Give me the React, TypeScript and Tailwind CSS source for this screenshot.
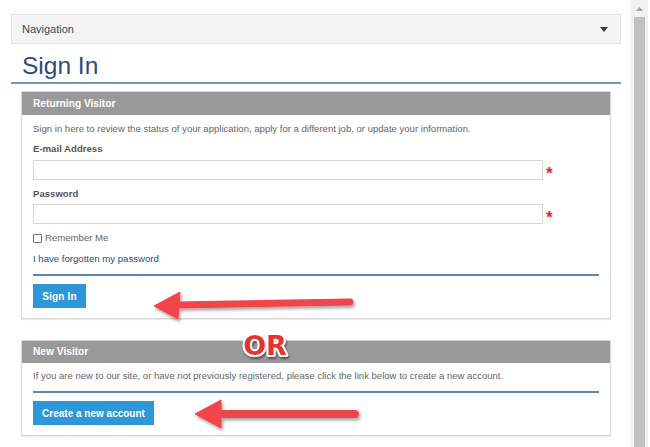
import { useState } from 'react';

const font = { fontFamily: '"Liberation Sans", Arial, sans-serif' };

function Panel({ title, headerH, children }: { title: string; headerH: string; children: React.ReactNode }) {
  return (
    <div className="border border-[#d9d9d9] bg-white shadow-[0_1px_1px_rgba(0,0,0,0.08)]">
      <div className={`${headerH} bg-[#999999] pl-[11px] flex items-center text-[10.2px] font-bold text-white`}>{title}</div>
      <div className="px-[11px] pb-[10px]">{children}</div>
    </div>
  );
}

function Field({ type }: { type: string }) {
  return (
    <div className="h-[20px] flex items-center">
      <input type={type} className="w-[510px] h-[20px] border border-[#d6d6d6] bg-white outline-none px-1 text-[11px]" />
      <span className="ml-[3px] h-[20px] leading-[27px] text-[#ff1a1a] text-[17px] font-bold">*</span>
    </div>
  );
}

function Arrows() {
  return (
    <svg className="absolute left-0 top-0 pointer-events-none" width="650" height="447" viewBox="0 0 650 447">
      <defs>
        <filter id="sh" x="-10%" y="-50%" width="120%" height="200%">
          <feDropShadow dx="1.5" dy="2.5" stdDeviation="1.5" floodColor="#000" floodOpacity="0.35" />
        </filter>
        <filter id="sh2" x="-20%" y="-50%" width="140%" height="200%">
          <feDropShadow dx="1" dy="2" stdDeviation="1" floodColor="#000" floodOpacity="0.45" />
        </filter>
      </defs>
      <g filter="url(#sh)" fill="#f2444a" stroke="#f2444a">
        <line x1="176" y1="305" x2="350" y2="302" strokeWidth="7" strokeLinecap="round" />
        <polygon points="154,306 180,292 178,319" strokeWidth="1" strokeLinejoin="round" />
      </g>
      <g filter="url(#sh)" fill="#f2444a" stroke="#f2444a">
        <line x1="218" y1="414" x2="355" y2="414" strokeWidth="8" strokeLinecap="round" />
        <polygon points="195,414 221,400 221,428" strokeWidth="1" strokeLinejoin="round" />
      </g>
      <text x="265" y="355" textAnchor="middle" fontSize="27" fontWeight="700" fontFamily='"DejaVu Sans", sans-serif'
        fill="#e8302e" stroke="#ffffff" strokeWidth="4" strokeLinejoin="round" paintOrder="stroke" filter="url(#sh2)">OR</text>
    </svg>
  );
}

export default function App() {
  const [remember, setRemember] = useState(false);
  return (
    <div className="relative w-[650px] h-[447px] overflow-hidden bg-white flex" style={font}>
      <div className="w-[610px] ml-[11px] pt-[14px] shrink-0">
        {/* navigation bar */}
        <div className="h-[30px] border border-[#e2e2e2] bg-[#f4f4f4] flex items-center justify-between pl-[10px] pr-[12px]">
          <span className="text-[11px] text-[#34495e]">Navigation</span>
          <svg width="8" height="5" viewBox="0 0 8 5"><polygon points="0,0 8,0 4,5" fill="#1f3f6b" /></svg>
        </div>

        <h1 className="h-[38px] pl-[11px] pt-[7px] text-[24.5px] leading-[30px] text-[#2b4d7c]">Sign In</h1>
        <div className="h-[2px] bg-[#7397bb]" />

        <div className="mx-[10px] mt-[7px]">
          <Panel title="Returning Visitor" headerH="h-[23px]">
            <p className="mt-[7px] h-[14px] leading-[14px] text-[9.55px] text-[#666]">Sign in here to review the status of your application, apply for a different job, or update your information.</p>
            <label className="block mt-[6px] h-[14px] leading-[14px] text-[9.6px] font-bold text-[#555]">E-mail Address</label>
            <div className="mt-[4px]"><Field type="email" /></div>
            <label className="block mt-[7px] h-[14px] leading-[14px] text-[9.6px] font-bold text-[#555]">Password</label>
            <div className="mt-[3px]"><Field type="password" /></div>
            <label className="mt-[7px] h-[14px] flex items-center gap-[3px] text-[9.6px] text-[#666]">
              <input type="checkbox" checked={remember} onChange={e => setRemember(e.target.checked)} className="w-[9px] h-[9px] m-0 appearance-none border border-[#777] rounded-[1px] bg-white" />
              Remember Me
            </label>
            <a href="#" className="block mt-[7px] h-[14px] leading-[14px] text-[9.6px] text-[#1a4f8a]">I have forgotten my password</a>
            <div className="mt-[8px] h-[2px] bg-[#5e86ae] w-[566px]" />
            <button className="mt-[8px] h-[24px] w-[53px] bg-[#2e97d8] text-white text-[10px] font-bold tracking-[0.2px]">Sign In</button>
          </Panel>

          <div className="mt-[21px]">
            <Panel title="New Visitor" headerH="h-[22px]">
              <p className="mt-[6px] h-[14px] leading-[14px] text-[9.55px] text-[#666]">If you are new to our site, or have not previously registered, please click the link below to create a new account.</p>
              <div className="mt-[8px] h-[2px] bg-[#5e86ae] w-[566px]" />
              <button className="mt-[8px] h-[24px] w-[121px] bg-[#2e97d8] text-white text-[10px] font-bold">Create a new account</button>
            </Panel>
          </div>
        </div>
      </div>

      {/* scrollbar */}
      <div className="ml-[10px] w-[17px] h-full bg-[#f1f1f1] flex flex-col items-center">
        <svg className="mt-[7px]" width="7" height="4" viewBox="0 0 7 4"><polygon points="0,4 7,4 3.5,0" fill="#a3a3a3" /></svg>
        <div className="mt-[6px] w-[11px] flex-1 bg-[#c1c1c1]" />
      </div>

      <Arrows />
    </div>
  );
}
